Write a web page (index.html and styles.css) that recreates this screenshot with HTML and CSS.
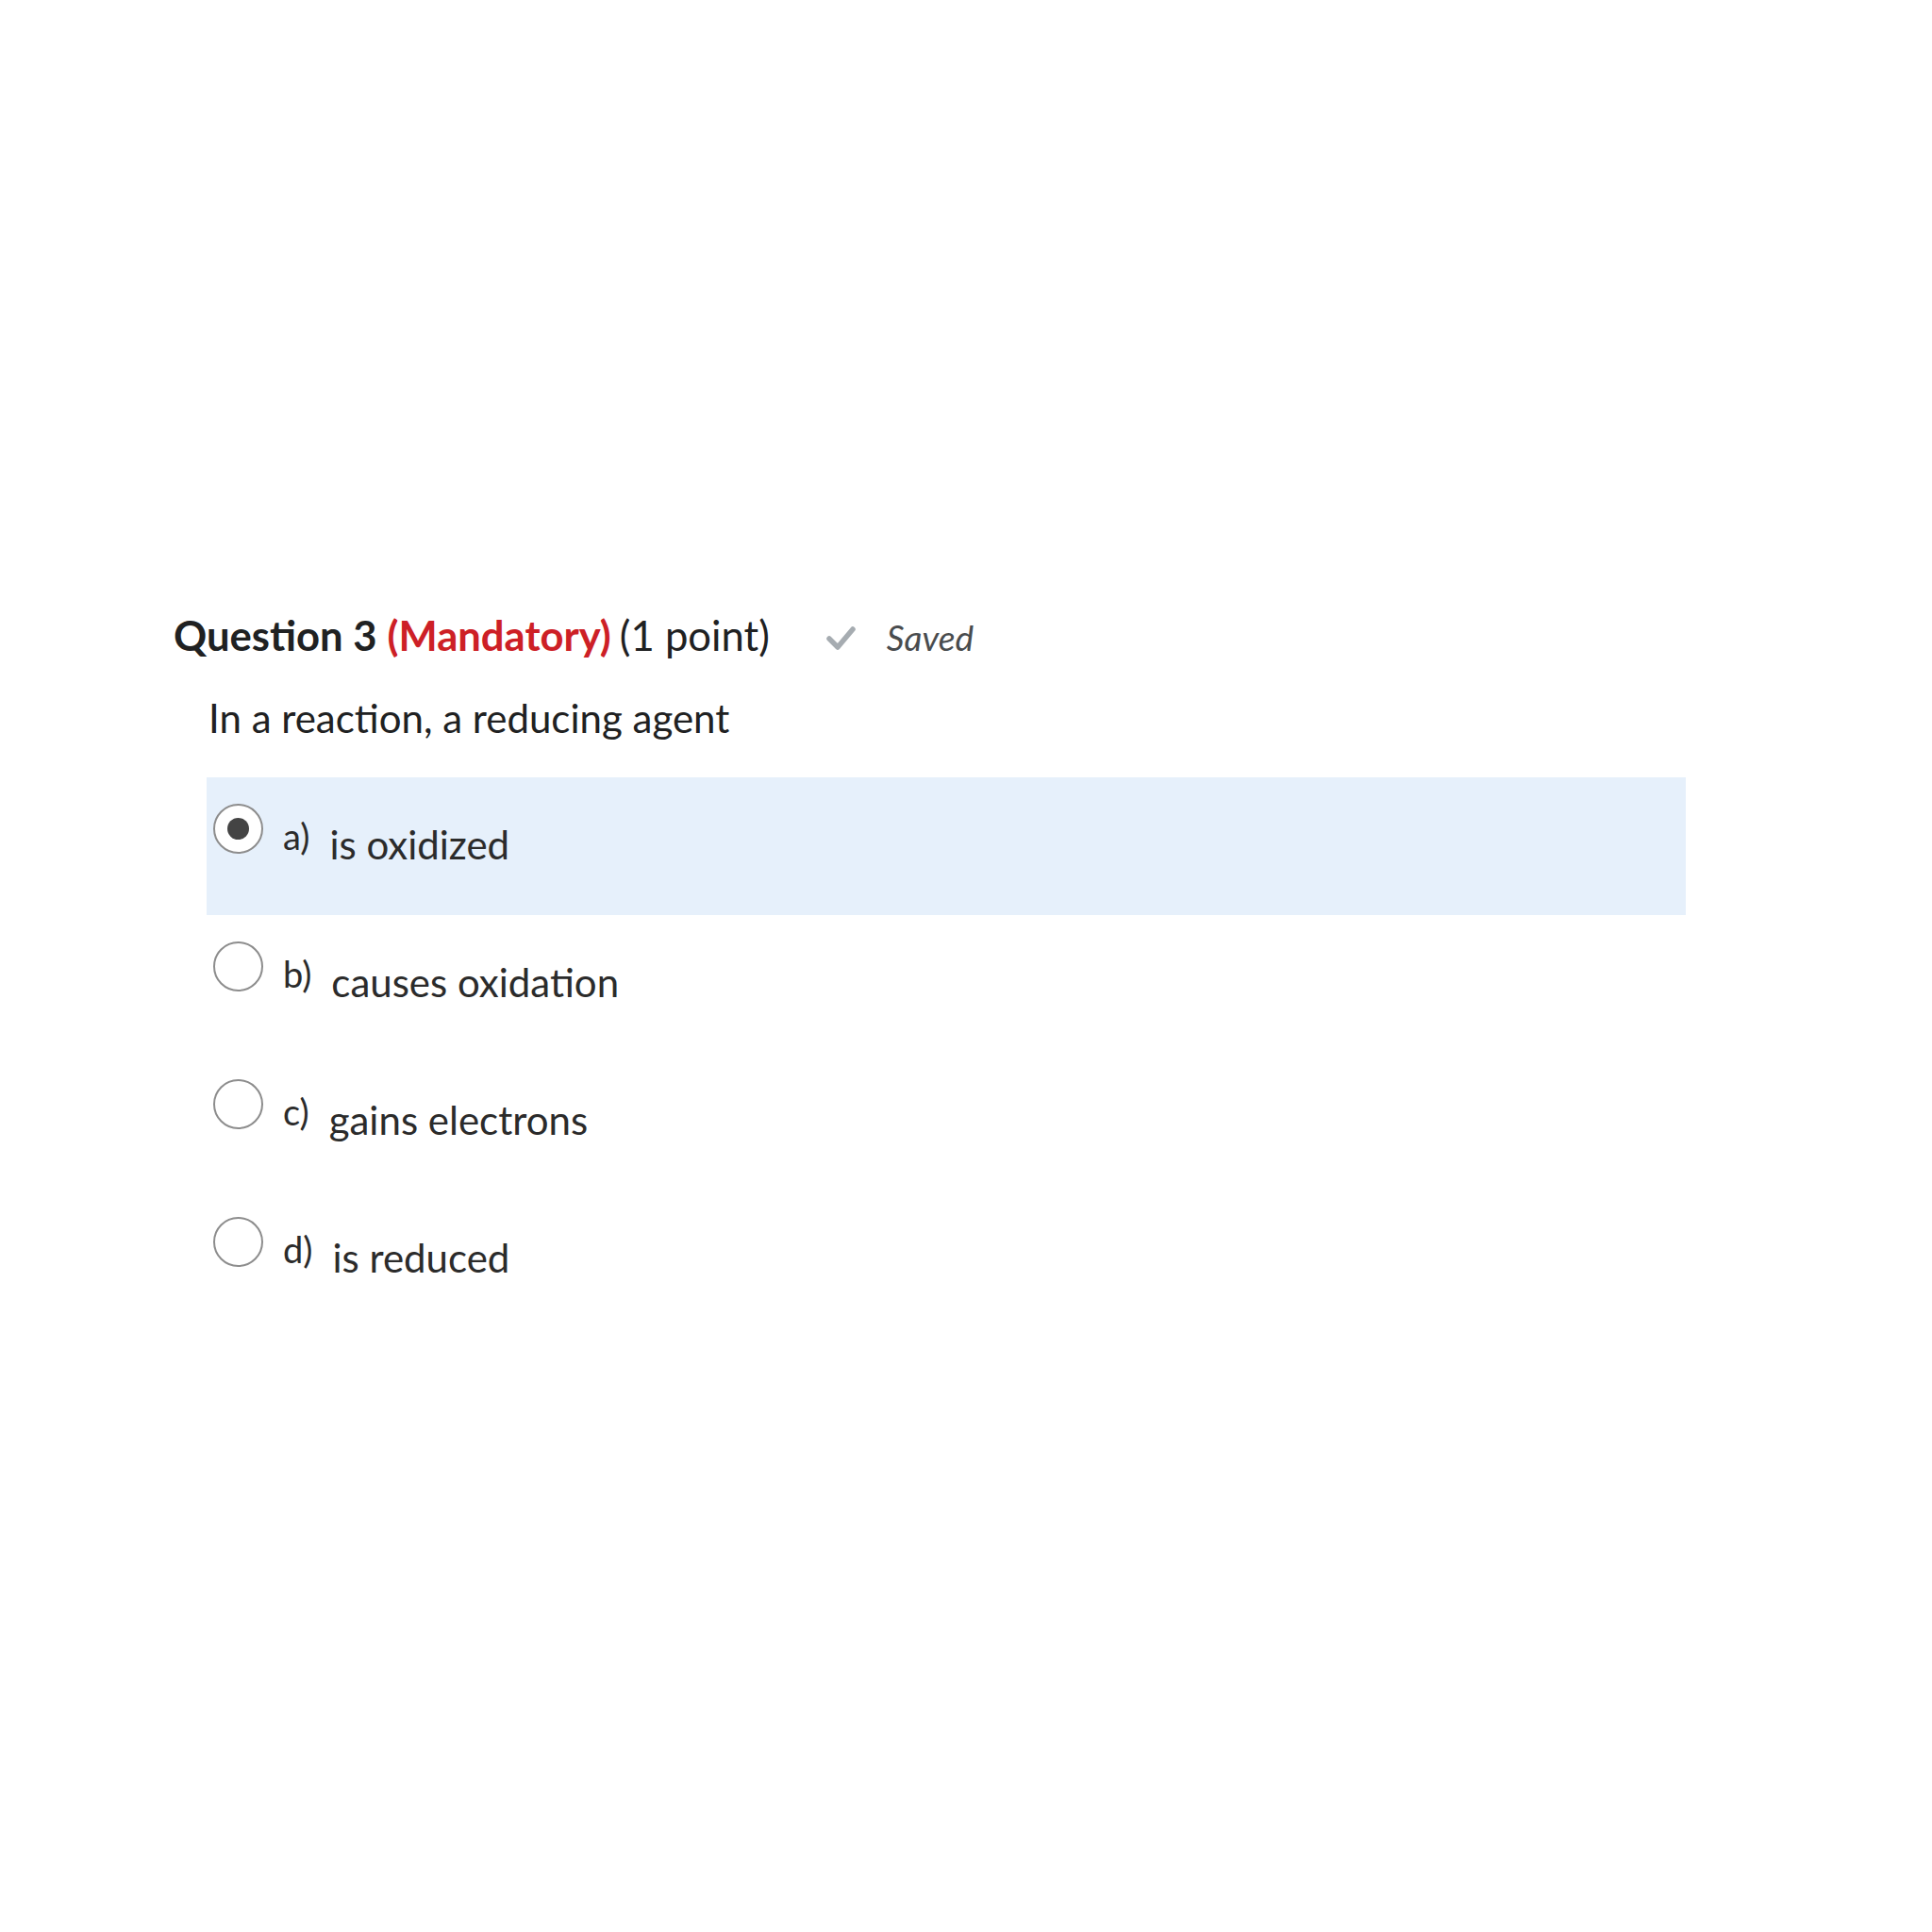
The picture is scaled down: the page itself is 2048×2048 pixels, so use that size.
FILE: index.html
```html
<!DOCTYPE html>
<html lang="en">
<head>
<meta charset="utf-8">
<title>Question 3</title>
<link rel="stylesheet" href="styles.css">
</head>
<body>
<div class="page">
  <div class="q-head">
    <span class="q-title">Question 3</span>
    <span class="q-mand">(Mandatory)</span>
    <span class="q-points">(1 point)</span>
    <span class="q-saved">
      <svg class="check" width="32" height="28" viewBox="0 0 32 28" aria-hidden="true">
        <polyline points="4,15 13,24 29,5" fill="none" stroke="#a6acb1" stroke-width="5.5" stroke-linecap="round" stroke-linejoin="round"/>
      </svg>
      <span class="saved-text">Saved</span>
    </span>
  </div>
  <div class="q-body">In a reaction, a reducing agent</div>
  <div class="options">
    <div class="option selected">
      <span class="radio checked"><span class="dot"></span></span>
      <span class="opt-label">a)</span>
      <span class="opt-text">is oxidized</span>
    </div>
    <div class="option">
      <span class="radio"></span>
      <span class="opt-label">b)</span>
      <span class="opt-text">causes oxidation</span>
    </div>
    <div class="option">
      <span class="radio"></span>
      <span class="opt-label">c)</span>
      <span class="opt-text">gains electrons</span>
    </div>
    <div class="option">
      <span class="radio"></span>
      <span class="opt-label">d)</span>
      <span class="opt-text">is reduced</span>
    </div>
  </div>
</div>
</body>
</html>
```

FILE: styles.css
```css
html, body {
  margin: 0;
  padding: 0;
  background: #ffffff;
}

body {
  font-family: Lato, "Open Sans", "Liberation Sans", sans-serif;
  color: #202122;
}

.page {
  padding: 648px 0 0 184px;
}

.q-head {
  display: flex;
  align-items: baseline;
  font-size: 43.6px;
  line-height: 50px;
  white-space: nowrap;
}

.q-title {
  font-weight: 700;
  color: #202122;
}

.q-mand {
  font-weight: 700;
  color: #cd2026;
  margin-left: 11px;
}

.q-points {
  font-weight: 400;
  color: #202122;
  margin-left: 9px;
}

.q-saved {
  display: flex;
  align-items: baseline;
  margin-left: 59px;
}

.check {
  align-self: center;
}

.saved-text {
  font-style: italic;
  font-size: 37px;
  color: #494c4e;
  margin-left: 33px;
}

.q-body {
  margin-left: 37px;
  margin-top: 35px;
  font-size: 42px;
  line-height: 50px;
  color: #202122;
}

.options {
  margin-left: 35px;
  margin-top: 38px;
  width: 1568px;
}

.option {
  display: flex;
  align-items: flex-start;
  box-sizing: border-box;
  height: 146px;
  padding: 28px 0 0 7px;
}

.option.selected {
  background: #e6f0fb;
  height: 146px;
}

.radio {
  box-sizing: border-box;
  flex: none;
  width: 53px;
  height: 53px;
  border: 2px solid #8d8d8d;
  border-radius: 50%;
  background: #ffffff;
  display: flex;
  align-items: center;
  justify-content: center;
}

.dot {
  width: 23px;
  height: 23px;
  border-radius: 50%;
  background: #444444;
}

.opt-label {
  margin-left: 21px;
  margin-top: 11px;
  font-size: 38px;
  line-height: 46px;
  color: #2b2b2b;
}

.opt-text {
  margin-left: 21px;
  margin-top: 18px;
  font-size: 42px;
  line-height: 50px;
  color: #2b2b2b;
}
```
